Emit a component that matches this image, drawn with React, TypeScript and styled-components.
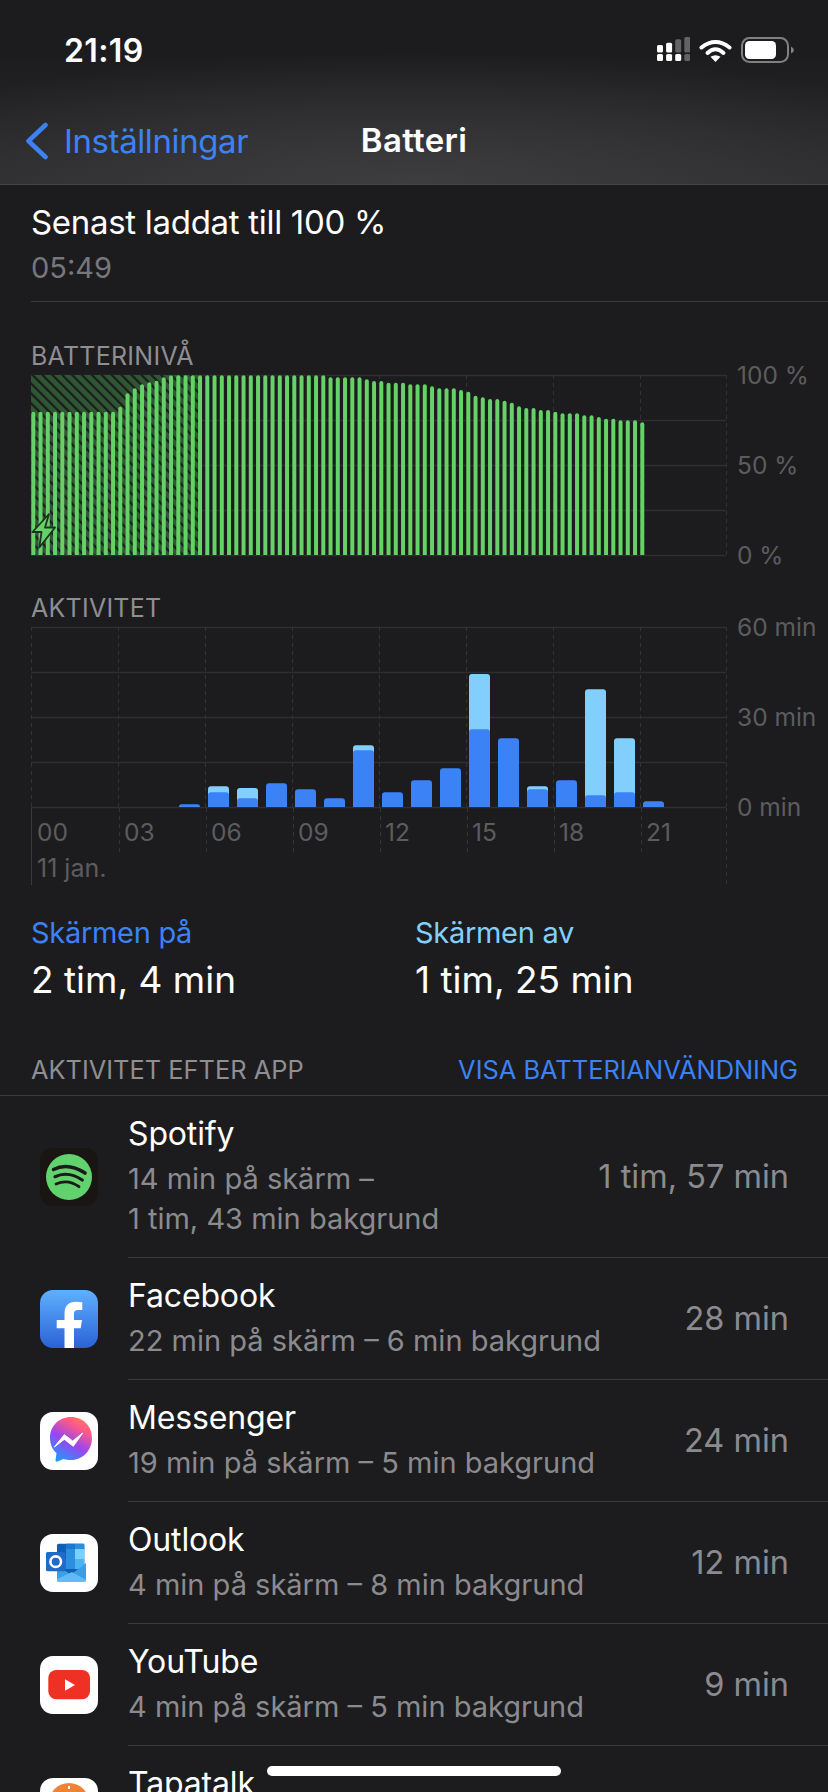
import styled, { createGlobalStyle } from "styled-components";

const BLUE = "#3b82f7";
const LIGHT_BLUE = "#82cffd";
const GREEN = "#64d266";

const GlobalStyle = createGlobalStyle`
  html, body {
    margin: 0;
    padding: 0;
    background: #1c1c1e;
  }
  * {
    box-sizing: border-box;
  }
`;

const Page = styled.div`
  position: relative;
  width: 828px;
  height: 1792px;
  overflow: hidden;
  background: #1c1c1e;
  color: #fff;
  font-family: Inter, "Liberation Sans", sans-serif;
`;

const Header = styled.header`
  height: 185px;
  border-bottom: 1px solid #434345;
  background: radial-gradient(ellipse 620px 130px at 50% 100%, #3d3d3f, rgba(61, 61, 63, 0) 100%),
    linear-gradient(#1c1c1e 50px, #2c2c2e);
`;

const StatusBar = styled.div`
  height: 100px;
  display: flex;
  justify-content: space-between;
  align-items: center;
  padding: 0 34px 0 64px;
`;

const Clock = styled.div`
  font-size: 32px;
  font-weight: 600;
  letter-spacing: 0.4px;
`;

const StatusIcons = styled.div`
  display: flex;
  align-items: center;
  gap: 9px;
  svg {
    display: block;
  }
`;

const NavBar = styled.nav`
  position: relative;
  height: 80px;
  display: flex;
  align-items: center;
  justify-content: center;
`;

const BackLink = styled.div`
  position: absolute;
  left: 25px;
  top: 22px;
  display: flex;
  align-items: center;
  gap: 16px;
  color: ${BLUE};
  font-size: 33px;
  letter-spacing: -0.4px;
  line-height: 36px;
`;

const NavTitle = styled.div`
  font-size: 33px;
  font-weight: 600;
  letter-spacing: 0.3px;
`;

const Summary = styled.section`
  margin-left: 31px;
  padding: 15px 0 11px;
  border-bottom: 1px solid #3a3a3c;
`;

const SummaryTitle = styled.div`
  font-size: 33px;
  line-height: 44px;
  letter-spacing: -0.3px;
`;

const SummaryTime = styled.div`
  font-size: 29px;
  line-height: 44px;
  margin-top: 2px;
  color: #77777b;
`;

const ChartSection = styled.section<{ $top: number }>`
  margin: ${(p) => p.$top}px 0 0 31px;
`;

const ChartTitle = styled.div`
  font-size: 25px;
  line-height: 28px;
  color: #8e8e93;
  letter-spacing: 0.25px;
  margin-bottom: 5px;
`;

const ChartRow = styled.div`
  display: flex;
  align-items: flex-start;
`;

const ChartBody = styled.div`
  width: 696px;
  svg {
    display: block;
    overflow: visible;
  }
`;

const YAxis = styled.div`
  height: 208px;
  margin: -14px 0 -13px 10px;
  display: flex;
  flex-direction: column;
  justify-content: space-between;
`;

const AxisLabel = styled.div`
  font-size: 24.5px;
  line-height: 28px;
  color: #5c5c5e;
  white-space: nowrap;
`;

const XAxis = styled.div`
  height: 77px;
  border-left: 1px solid #3a3a3c;
  background: linear-gradient(#333335 50%, transparent 50%) right top / 1px 8px repeat-y;
`;

const HourRow = styled.div`
  height: 44px;
  display: grid;
  grid-template-columns: repeat(8, 87px);
`;

const HourCell = styled.div`
  padding: 10px 0 0 5px;
  font-size: 24.5px;
  line-height: 28px;
  color: #5c5c5e;
  background: linear-gradient(#333335 50%, transparent 50%) left top / 1px 8px repeat-y;
  &:first-child {
    background: none;
  }
`;

const DateLabel = styled.div`
  padding-left: 5px;
  font-size: 25px;
  line-height: 28px;
  color: #5c5c5e;
  margin-top: 2px;
`;

const Stats = styled.section`
  display: grid;
  grid-template-columns: 384px 1fr;
  padding-left: 31px;
  margin-top: 28px;
`;

const StatLabel = styled.div<{ $color: string }>`
  font-size: 29px;
  line-height: 40px;
  letter-spacing: -0.3px;
  color: ${(p) => p.$color};
`;

const StatValue = styled.div`
  margin-top: 3px;
  font-size: 37px;
  line-height: 48px;
  letter-spacing: 0;
`;

const ListHeader = styled.div`
  margin-top: 52px;
  height: 40px;
  padding: 0 30px 11px 31px;
  border-bottom: 1px solid #3a3a3c;
  display: flex;
  justify-content: space-between;
  font-size: 25.4px;
  line-height: 28px;
  color: #8e8e93;
`;

const ListAction = styled.div`
  color: ${BLUE};
`;

const AppRowWrap = styled.div<{ $tall: boolean }>`
  display: flex;
  height: ${(p) => (p.$tall ? 162 : 122)}px;
  padding-left: 40px;
`;

const IconColumn = styled.div`
  width: 88px;
  flex: none;
  display: flex;
  align-items: center;
`;

const IconBox = styled.div<{ $bg: string }>`
  width: 58px;
  height: 58px;
  border-radius: 13px;
  overflow: hidden;
  background: ${(p) => p.$bg};
  svg {
    display: block;
  }
`;

const RowBody = styled.div`
  flex: 1;
  display: flex;
  justify-content: space-between;
  padding-right: 39px;
  border-bottom: 1px solid #3a3a3c;
`;

const RowText = styled.div`
  padding-top: 18px;
`;

const AppName = styled.div`
  font-size: 32px;
  line-height: 40px;
  letter-spacing: -0.15px;
`;

const AppDetail = styled.div`
  margin-top: 5px;
  font-size: 29px;
  line-height: 40px;
  color: #8b8b8f;
  white-space: pre-line;
`;

const AppTotal = styled.div`
  align-self: center;
  font-size: 32.5px;
  color: #8b8b8f;
`;

const HomeIndicator = styled.div`
  position: absolute;
  left: 267px;
  bottom: 16px;
  width: 294px;
  height: 10px;
  border-radius: 5px;
  background: #fff;
`;

// bar heights in px, one bar per 15 minutes
const repeat = (h: number, n: number) => Array<number>(n).fill(h);
const LEVELS = [
  ...repeat(143.3, 12), 148.3, 161.7, 166.7, 170.7, 172.7, 174.3, 177.7,
  ...repeat(179.7, 22), ...repeat(177.7, 5), 175.7, ...repeat(174, 2), ...repeat(172.3, 3),
  ...repeat(170.7, 3), 168.7, ...repeat(166.7, 3), 165, 163.3, 159.3, 157.7, ...repeat(156, 2),
  154.3, 152.3, 148.7, ...repeat(147, 2), ...repeat(145, 2), 143.3, ...repeat(141.7, 3),
  ...repeat(139.7, 2), 138, ...repeat(136.3, 2), ...repeat(134.7, 3), 132.7,
];

// [hour, screen on, screen off]
const ACTIVITY = [
  [5, 2.7, 0], [6, 14.7, 6], [7, 8.7, 10.3], [8, 23.7, 0], [9, 17.7, 0], [10, 8.7, 0],
  [11, 56.7, 5], [12, 14.7, 0], [13, 26.7, 0], [14, 38.7, 0], [15, 77.7, 55.3], [16, 68.7, 0],
  [17, 17.7, 3], [18, 26.7, 0], [19, 11.7, 106], [20, 14.7, 54], [21, 5.7, 0],
];

const HOURS = ["00", "03", "06", "09", "12", "15", "18", "21"];

const APPS = [
  { name: "Spotify", detail: "14 min på skärm –\n1 tim, 43 min bakgrund", total: "1 tim, 57 min", bg: "#181513", tall: true },
  { name: "Facebook", detail: "22 min på skärm – 6 min bakgrund", total: "28 min", bg: "linear-gradient(#5fb0ff, #2a62d6)" },
  { name: "Messenger", detail: "19 min på skärm – 5 min bakgrund", total: "24 min", bg: "#fff" },
  { name: "Outlook", detail: "4 min på skärm – 8 min bakgrund", total: "12 min", bg: "#fff" },
  { name: "YouTube", detail: "4 min på skärm – 5 min bakgrund", total: "9 min", bg: "#fff" },
  { name: "Tapatalk", detail: "", total: "", bg: "#fff" },
];

function topRounded(x: number, base: number, w: number, h: number, r: number) {
  const rr = Math.min(r, h);
  return `M${x} ${base}V${base - h + rr}Q${x} ${base - h} ${x + rr} ${base - h}H${x + w - rr}Q${x + w} ${base - h} ${x + w} ${base - h + rr}V${base}Z`;
}

function ChartGrid() {
  return (
    <>
      {[0.5, 45.5, 90.5, 135.5, 180.5].map((y) => (
        <line key={y} x1={0} x2={695} y1={y} y2={y} stroke="#2f2f31" strokeWidth={1.5} />
      ))}
      {HOURS.map((h, i) => (
        <line key={h} x1={i * 87 + 0.5} x2={i * 87 + 0.5} y1={0} y2={180} stroke="#333335" strokeDasharray="4 4" />
      ))}
      <line x1={695.5} x2={695.5} y1={0} y2={180} stroke="#333335" strokeDasharray="4 4" />
    </>
  );
}

function LevelChart() {
  return (
    <svg width={696} height={181}>
      <defs>
        <pattern id="hatch" patternUnits="userSpaceOnUse" width={7} height={7} patternTransform="rotate(-45)">
          <rect width={7} height={7} fill="#2f5733" />
          <rect width={2.2} height={7} fill="#1c1c1e" />
        </pattern>
      </defs>
      <ChartGrid />
      <rect x={0} y={0} width={167} height={180} fill="url(#hatch)" />
      {LEVELS.map((h, i) => (
        <path key={i} d={topRounded(0.3 + i * 7.25, 180, 4, h, 2)} fill={GREEN} />
      ))}
      <path d="M18 139L1.5 157H10.5L8.3 172.5L24 152.5H14Z" fill={GREEN} stroke="#1f3323" strokeWidth={1.8} strokeLinejoin="round" />
    </svg>
  );
}

function ActivityChart() {
  return (
    <svg width={696} height={181}>
      <ChartGrid />
      {ACTIVITY.map(([hour, on, off]) => {
        const x = hour * 29 + 3;
        return (
          <g key={hour}>
            {off > 0 && <path d={topRounded(x, 180, 21, on + off, 3)} fill={LIGHT_BLUE} />}
            <path d={topRounded(x, 180, 21, on, 3)} fill={BLUE} />
          </g>
        );
      })}
    </svg>
  );
}

function SignalIcon() {
  const tops = [8, 5.7, 2.3, 0];
  return (
    <svg width={33} height={26}>
      {tops.map((t, i) => (
        <g key={i} fill={i < 2 ? "#fff" : "#636365"}>
          <rect x={i * 9.1} y={t} width={6} height={15.5 - t} rx={1.5} />
          <rect x={i * 9.1} y={17} width={6} height={7} rx={1.5} fill={i < 3 ? "#fff" : "#636365"} />
        </g>
      ))}
    </svg>
  );
}

function WifiIcon() {
  return (
    <svg width={33} height={25}>
      <path d="M2.5 9.5Q16.5 -1.5 30.5 9.5" fill="none" stroke="#fff" strokeWidth={4} strokeLinecap="round" />
      <path d="M8.5 15Q16.5 7.5 24.5 15" fill="none" stroke="#fff" strokeWidth={4} strokeLinecap="round" />
      <path d="M16.5 24L11.5 18.8Q16.5 15.5 21.5 18.8Z" fill="#fff" />
    </svg>
  );
}

function BatteryIcon() {
  return (
    <svg width={53} height={26}>
      <rect x={1} y={1} width={46} height={24} rx={7.5} fill="none" stroke="#808082" strokeWidth={2} />
      <rect x={4} y={4} width={31} height={18} rx={4.5} fill="#fff" />
      <path d="M50 9.5Q53 11 53 13T50 16.5Z" fill="#808082" />
    </svg>
  );
}

function BackChevron() {
  return (
    <svg width={23} height={38}>
      <path d="M20.5 3L3.5 19L20.5 35" fill="none" stroke={BLUE} strokeWidth={4.6} strokeLinecap="round" strokeLinejoin="round" />
    </svg>
  );
}

function AppIcon({ name }: { name: string }) {
  return (
    <svg width={58} height={58} viewBox="0 0 58 58">
      {name === "Spotify" && (
        <>
          <circle cx={29} cy={29} r={23} fill="#62d26f" />
          <g fill="none" stroke="#1a1a18" strokeLinecap="round">
            <path d="M13.5 21.5Q28 14 45 25" strokeWidth={3.6} />
            <path d="M15 28.7Q28 22.5 42.3 32" strokeWidth={3.2} />
            <path d="M16 36Q28 30.5 39 38.7" strokeWidth={2.8} />
          </g>
        </>
      )}
      {name === "Facebook" && (
        <path
          d="M24.5 58V38.3H16.7V30H24.5V23.5C24.5 15.5 29 11.7 36 11.7C38 11.7 40 12 42.3 12.3V20H38C35 20 34 21.5 34 24V30H42L40.7 38.3H34V58Z"
          fill="#fff"
        />
      )}
      {name === "Messenger" && (
        <>
          <defs>
            <linearGradient id="msg" x1="0.2" y1="1" x2="0.75" y2="0">
              <stop offset="0" stopColor="#1a9cff" />
              <stop offset="0.45" stopColor="#9a45ee" />
              <stop offset="0.8" stopColor="#ff5a86" />
              <stop offset="1" stopColor="#ff7a5e" />
            </linearGradient>
          </defs>
          <path
            d="M31 5C19 5 10 13.800 10 26C10 32.500 12.500 37.500 16.500 41.200L15.500 48C15.400 49.500 16.500 50 17.500 49.500L23.500 47C26 47.800 28.500 48 31 48C43 48 52 38 52 26C52 13.800 43 5 31 5Z"
            fill="url(#msg)"
          />
          <path d="M14.300 35L24.300 22.700L32.700 29L42.700 21L33.300 34.300L24.300 27.300Z" fill="#fff" stroke="#fff" strokeLinejoin="round" />
        </>
      )}
      {name === "Outlook" && (
        <>
          <rect x={17} y={9.700} width={27.300} height={37.600} rx={1.500} fill="#0f5fb5" />
          <rect x={26} y={9.700} width={9} height={6.300} fill="#1c77cf" />
          <rect x={35} y={9.700} width={9.300} height={6.300} fill="#2a8fe0" />
          <rect x={26} y={15} width={9} height={10} fill="#2a8fe0" />
          <rect x={35} y={15} width={9.300} height={10} fill="#79d0fb" />
          <rect x={17} y={25} width={9} height={10} fill="#1c77cf" />
          <rect x={26} y={25} width={9} height={10} fill="#2a8fe0" />
          <rect x={35} y={25} width={9.300} height={10} fill="#4fb2f1" />
          <path d="M17 32L31 40.500L46 29V46C46 47 45 47.500 44 47.500H19C18 47.500 17 47 17 46Z" fill="#3a9fe8" />
          <path d="M17 47.500L46 47.500V46L32 38L17 45Z" fill="#65b8f0" />
          <rect x={6} y={18} width={19.300} height={19.300} rx={1.500} fill="#1e6cc8" />
          <circle cx={15.700} cy={27.700} r={5.300} fill="none" stroke="#fff" strokeWidth={2.600} />
        </>
      )}
      {name === "YouTube" && (
        <>
          <rect x={8.300} y={14} width={41.700} height={29.300} rx={8} fill="#ee3124" />
          <path d="M25 23.300V34.700L35 29Z" fill="#fff" />
        </>
      )}
      {name === "Tapatalk" && (
        <>
          <circle cx={29} cy={25} r={20} fill="#f08238" />
          <rect x={28} y={8} width={2} height={3} fill="#fff" />
        </>
      )}
    </svg>
  );
}

function AppRow({ app }: { app: (typeof APPS)[number] }) {
  return (
    <AppRowWrap $tall={!!app.tall}>
      <IconColumn>
        <IconBox $bg={app.bg}>
          <AppIcon name={app.name} />
        </IconBox>
      </IconColumn>
      <RowBody>
        <RowText>
          <AppName>{app.name}</AppName>
          <AppDetail>{app.detail}</AppDetail>
        </RowText>
        <AppTotal>{app.total}</AppTotal>
      </RowBody>
    </AppRowWrap>
  );
}

export default function App() {
  return (
    <Page>
      <GlobalStyle />
      <Header>
        <StatusBar>
          <Clock>21:19</Clock>
          <StatusIcons>
            <SignalIcon />
            <WifiIcon />
            <BatteryIcon />
          </StatusIcons>
        </StatusBar>
        <NavBar>
          <BackLink>
            <BackChevron />
            Inställningar
          </BackLink>
          <NavTitle>Batteri</NavTitle>
        </NavBar>
      </Header>

      <Summary>
        <SummaryTitle>Senast laddat till 100 %</SummaryTitle>
        <SummaryTime>05:49</SummaryTime>
      </Summary>

      <ChartSection $top={40}>
        <ChartTitle>BATTERINIVÅ</ChartTitle>
        <ChartRow>
          <ChartBody>
            <LevelChart />
          </ChartBody>
          <YAxis>
            <AxisLabel>100 %</AxisLabel>
            <AxisLabel>50 %</AxisLabel>
            <AxisLabel>0 %</AxisLabel>
          </YAxis>
        </ChartRow>
      </ChartSection>

      <ChartSection $top={38}>
        <ChartTitle>AKTIVITET</ChartTitle>
        <ChartRow>
          <ChartBody>
            <ActivityChart />
            <XAxis>
              <HourRow>
                {HOURS.map((h) => (
                  <HourCell key={h}>{h}</HourCell>
                ))}
              </HourRow>
              <DateLabel>11 jan.</DateLabel>
            </XAxis>
          </ChartBody>
          <YAxis>
            <AxisLabel>60 min</AxisLabel>
            <AxisLabel>30 min</AxisLabel>
            <AxisLabel>0 min</AxisLabel>
          </YAxis>
        </ChartRow>
      </ChartSection>

      <Stats>
        <div>
          <StatLabel $color={BLUE}>Skärmen på</StatLabel>
          <StatValue>2 tim, 4 min</StatValue>
        </div>
        <div>
          <StatLabel $color={LIGHT_BLUE}>Skärmen av</StatLabel>
          <StatValue>1 tim, 25 min</StatValue>
        </div>
      </Stats>

      <ListHeader>
        <div>AKTIVITET EFTER APP</div>
        <ListAction>VISA BATTERIANVÄNDNING</ListAction>
      </ListHeader>

      {APPS.map((app) => (
        <AppRow key={app.name} app={app} />
      ))}

      <HomeIndicator />
    </Page>
  );
}
